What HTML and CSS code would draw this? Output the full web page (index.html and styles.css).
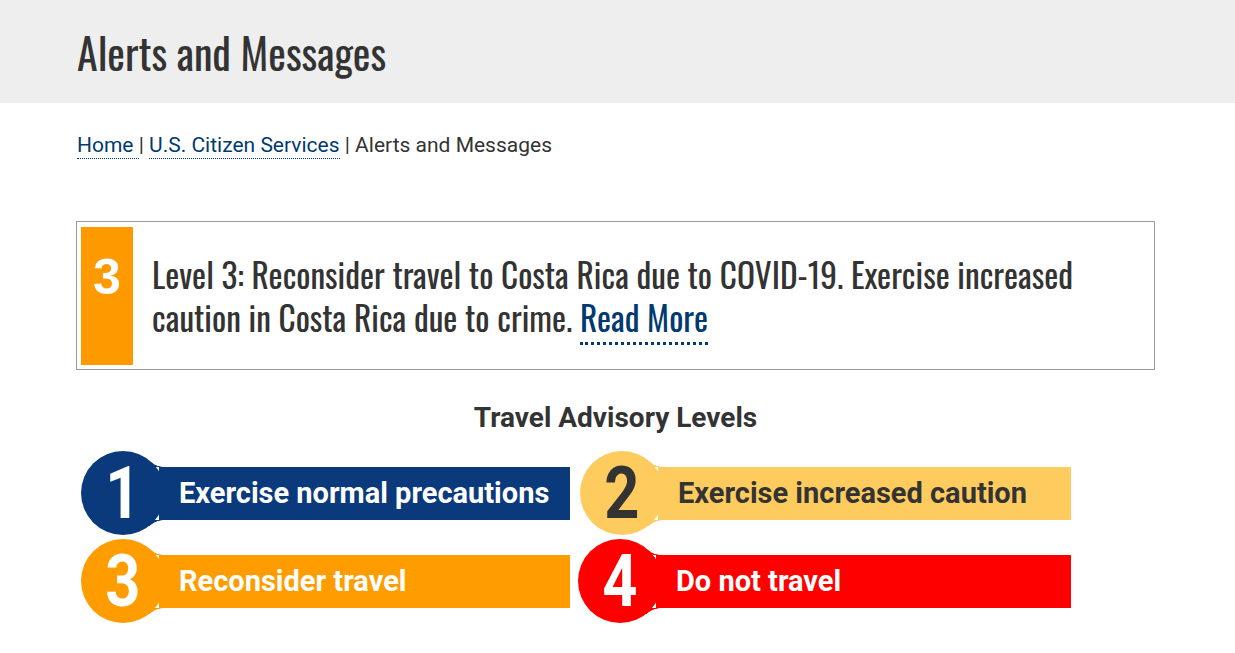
FILE: index.html
```html
<!DOCTYPE html>
<html>
<head>
<meta charset="utf-8">
<link rel="stylesheet" href="styles.css">
</head>
<body>
<header class="banner">
  <div class="wrap"><h1 class="page-title">Alerts and Messages</h1></div>
</header>
<main class="wrap">
  <nav class="crumbs"><a href="#">Home </a>| <a href="#">U.S. Citizen Services</a> | Alerts and Messages</nav>
  <section class="alert">
    <div class="alert-level">3</div>
    <p class="alert-text">Level 3: Reconsider travel to Costa Rica due to COVID-19. Exercise increased caution in Costa Rica due to crime. <a href="#">Read More</a></p>
  </section>
  <h2 class="levels-title">Travel Advisory Levels</h2>
  <div class="levels">
    <div class="lvl lvl-1"><span class="num"><span class="digit">1</span></span><span class="bar">Exercise normal precautions</span></div>
    <div class="lvl lvl-2"><span class="num"><span class="digit">2</span></span><span class="bar">Exercise increased caution</span></div>
    <div class="lvl lvl-3"><span class="num"><span class="digit">3</span></span><span class="bar">Reconsider travel</span></div>
    <div class="lvl lvl-4"><span class="num"><span class="digit">4</span></span><span class="bar">Do not travel</span></div>
  </div>
</main>
</body>
</html>
```
FILE: styles.css
```css
* { box-sizing: border-box; }
body { margin: 0; background: #fff; color: #333; font-family: Roboto, "Liberation Sans", sans-serif; }
.wrap { width: 1079px; margin-left: 76px; }
.banner { background: #eeeeee; height: 103px; }
.banner .wrap { padding-left: 1px; }
.page-title {
  margin: 0; padding-top: 24px;
  font-family: Oswald, "Roboto Condensed", sans-serif;
  font-weight: 400; font-size: 42px; line-height: 56px; color: #333;
}
.crumbs { padding: 29px 0 0 1px; font-size: 21px; line-height: 26px; color: #333; }
.crumbs a { color: #003a70; text-decoration: none; border-bottom: 1px dotted #003a70; padding-bottom: 1px; }
.alert {
  margin-top: 63px; border: 1px solid #999; padding: 5px 4px 4px 4px;
  display: flex; gap: 19px; min-height: 149px;
}
.alert-level {
  width: 52px; flex: none; background: #ff9900; color: #fff;
  font-family: "Liberation Sans", Arial, sans-serif; font-weight: 700;
  font-size: 50px; text-align: center; padding-top: 25px; line-height: 50px;
}
.alert-text {
  margin: 26px 0 0 0; flex: 1; padding-right: 40px;
  font-family: Oswald, "Roboto Condensed", sans-serif;
  font-size: 33.4px; line-height: 43px; color: #333;
}
.alert-text a { color: #003a70; text-decoration: none; border-bottom: 3px dotted #003a70; }
.levels-title { margin: 33px 0 0 0; text-align: center; font-size: 28px; font-weight: 700; line-height: 30px; color: #333; }
.levels {
  margin: 18px 0 0 5px; width: 990px;
  display: grid; grid-template-columns: 489px 491px; column-gap: 10px; row-gap: 4px;
}
.lvl { display: flex; align-items: center; height: 84px; }
.lvl-4 { margin-left: -2px; }
.num {
  width: 84px; height: 84px; border-radius: 50%; flex: none;
  display: flex; align-items: center; justify-content: center;
  font-size: 73px; font-weight: 700; line-height: 1; position: relative; z-index: 1;
}
.digit { display: inline-block; transform: scaleX(0.84); }
.bar {
  flex: 1; height: 53px; margin-left: -6px; padding-left: 20px;
  display: flex; align-items: center; font-size: 29px; font-weight: 700;
  position: relative;
}
.bar::before, .bar::after {
  content: ""; position: absolute; left: -10px; width: 15px; height: 6px;
}
.bar::before {
  top: -6px;
  background: radial-gradient(circle 20px at 14.6px -14px, transparent 19.5px, var(--c) 20px);
}
.bar::after {
  bottom: -6px;
  background: radial-gradient(circle 20px at 14.6px 20px, transparent 19.5px, var(--c) 20px);
}
.lvl-1 { --c: #0b3a7c; }
.lvl-2 { --c: #fecb5f; }
.lvl-3 { --c: #ff9c00; }
.lvl-4 { --c: #ff0000; }
.lvl-1 .num, .lvl-1 .bar { background-color: #0b3a7c; color: #fff; }
.lvl-2 .num, .lvl-2 .bar { background-color: #fecb5f; color: #333; }
.lvl-3 .num, .lvl-3 .bar { background-color: #ff9c00; color: #fff; }
.lvl-4 .num, .lvl-4 .bar { background-color: #ff0000; color: #fff; }
```
